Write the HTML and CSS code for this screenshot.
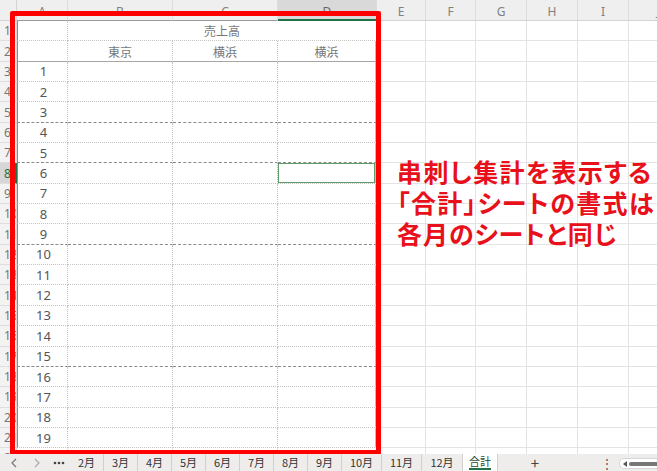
FILE: index.html
```html
<!DOCTYPE html>
<html lang="ja">
<head>
    <meta charset="UTF-8">
    <meta name="viewport" content="width=device-width, initial-scale=1.0">
    <title>合計</title>
    <link rel="stylesheet" href="styles.css">
</head>
<body>
    <div class="sheet">
        <div class="grid" id="grid"></div>
        <div class="frame"></div>
        <div class="note">
            <div class="line1">串刺し集計を表示する</div>
            <div class="line2">「合計」シートの書式は</div>
            <div class="line3">各月のシートと同じ</div>
        </div>
    </div>
    <div class="tabs">
        <span class="nav"><svg width="8" height="10" viewBox="0 0 8 10"><polyline points="6,1 2,5 6,9" fill="none" stroke="#777" stroke-width="1.2"/></svg></span>
        <span class="nav"><svg width="8" height="10" viewBox="0 0 8 10"><polyline points="2,1 6,5 2,9" fill="none" stroke="#aaa" stroke-width="1.2"/></svg></span>
        <span class="more"><svg width="12" height="4" viewBox="0 0 12 4"><circle cx="2" cy="2" r="1.3" fill="#444"/><circle cx="6" cy="2" r="1.3" fill="#444"/><circle cx="10" cy="2" r="1.3" fill="#444"/></svg></span>
        <span class="tab">2月</span>
        <span class="tab">3月</span>
        <span class="tab">4月</span>
        <span class="tab">5月</span>
        <span class="tab">6月</span>
        <span class="tab">7月</span>
        <span class="tab">8月</span>
        <span class="tab">9月</span>
        <span class="tab wide">10月</span>
        <span class="tab wide">11月</span>
        <span class="tab wide last">12月</span>
        <span class="tab current"><span class="label">合計</span></span>
        <span class="add">+</span>
        <span class="kebab">⋮</span>
        <div class="scroll"><span class="arrow"></span><span class="thumb"></span></div>
    </div>

    <script>
        const cols = ['A', 'B', 'C', 'D', 'E', 'F', 'G', 'H', 'I', 'J'];
        const grid = document.getElementById('grid');
        const darkLines = [5, 7, 11, 17];

        function addCell(className, text) {
            const el = document.createElement('div');
            el.className = className;
            if (text) el.textContent = text;
            grid.appendChild(el);
            return el;
        }

        // 列見出し
        addCell('corner');
        cols.forEach((c, i) => {
            let cls = 'col-head';
            if (i < 4) cls += ' in-area';
            if (c === 'D') cls += ' active';
            addCell(cls, c);
        });

        // 行
        for (let r = 1; r <= 22; r++) {
            addCell('row-head' + (r === 8 ? ' active' : ''), String(r));
            cols.forEach((c, i) => {
                if (r === 1 && (c === 'C' || c === 'D')) return;
                let cls = 'cell';
                let text = '';
                if (i < 4 && r <= 21) {
                    cls += ' area';
                    if (c === 'A') cls += ' col-a';
                    if (c === 'D') cls += ' col-d';
                    if (r === 2) cls += ' line-solid';
                    if (darkLines.includes(r)) cls += ' line-dark';
                    if (r === 1 && c === 'B') { cls += ' merge'; text = '売上高'; }
                    if (r === 2 && c === 'B') text = '東京';
                    if (r === 2 && (c === 'C' || c === 'D')) text = '横浜';
                    if (r >= 3 && c === 'A') text = String(r - 2);
                    if (r === 8 && c === 'D') cls += ' selected';
                }
                addCell(cls, text);
            });
        }
    </script>
</body>
</html>
```

FILE: styles.css
```css
body {
    margin: 0;
    width: 657px;
    height: 471px;
    overflow: hidden;
    background-color: #fff;
    font-family: 'Noto Sans CJK JP', sans-serif;
}

.sheet {
    position: relative;
    height: 454px;
    overflow: hidden;
}

.grid {
    display: grid;
    grid-template-columns: 17px 51px 105px 105px 99px 49px 50px 51px 51px 51px 60px;
    grid-template-rows: 21px repeat(22, 20.35px);
}

.grid > div {
    box-sizing: border-box;
    display: flex;
    align-items: center;
    justify-content: center;
    overflow: hidden;
    white-space: nowrap;
}

.corner {
    background-color: #efefef;
    border-right: 1px solid #d4d4d4;
    border-bottom: 1px solid #d4d4d4;
}

.col-head {
    background-color: #efefef;
    border-right: 1px solid #dcdcdc;
    border-bottom: 1px solid #d4d4d4;
    color: #808080;
    font-family: 'Noto Sans', sans-serif;
    font-size: 12px;
    padding-top: 3px;
}

.col-head.in-area {
    border-bottom-color: #9a9a9a;
}

.col-head.active {
    background-color: #d9d9d9;
    color: #666;
    border-bottom: 2px solid #217346;
}

.row-head {
    background-color: #f3f3f3;
    border-right: 1px solid #d4d4d4;
    border-bottom: 1px solid #dedede;
    color: #777;
    font-family: 'Noto Sans', sans-serif;
    font-size: 12px;
    justify-content: flex-start !important;
    padding-left: 4px;
}

.row-head.active {
    background-color: #d6d6d6;
    color: #217346;
    border-right: 2px solid #217346;
}

.cell {
    border-right: 1px solid #e3e3e3;
    border-bottom: 1px solid #e3e3e3;
    font-size: 12px;
    color: #666;
}

.cell.area {
    border-right: 1px dotted #c4c4c4;
    border-bottom: 1px dotted #c4c4c4;
}

.cell.col-a {
    border-left: 1px solid #8c8c8c;
    color: #555;
    font-family: 'Noto Sans', sans-serif;
    font-size: 13px;
    padding-left: 2px;
}

.cell.col-d {
    border-right: 2px solid #bdbdbd;
}

.cell.merge {
    grid-column: span 3;
    color: #777;
}

.cell.line-solid {
    border-bottom: 1px solid #a6a6a6;
    color: #777;
}

.cell.line-dark {
    border-bottom: 1px dashed #8a8a8a;
}

.cell.selected {
    box-shadow: inset 0 0 0 1px #5e9c69;
}

.frame {
    position: absolute;
    left: 10px;
    top: 11px;
    width: 371px;
    height: 444px;
    box-sizing: border-box;
    border: 5px solid #f00;
    border-radius: 2px;
}

.note {
    position: absolute;
    left: 397px;
    top: 156px;
    color: #e8101a;
    font-weight: bold;
    font-size: 25px;
    line-height: 31px;
    font-feature-settings: "palt";
    white-space: nowrap;
}

.line1 {
    letter-spacing: 1.4px;
}

.line2 {
    letter-spacing: 1.4px;
}

.line3 {
    letter-spacing: 1px;
}

.tabs {
    display: flex;
    align-items: stretch;
    height: 17px;
    background-color: #efedeb;
    padding-left: 2px;
    font-size: 11px;
    color: #333;
}

.tabs > span {
    display: flex;
    align-items: center;
    justify-content: center;
    box-sizing: border-box;
    line-height: 1;
}

.nav {
    width: 23px;
}

.more {
    width: 22px;
}

.tab {
    width: 34px;
    border-right: 1px solid #d2d0ce;
}

.tab.wide {
    width: 40px;
}

.tab.last {
    width: 41px;
}

.tab.current {
    width: 35px;
    background-color: #fff;
}

.tab.current .label {
    border-bottom: 2px solid #217346;
    line-height: 13px;
    color: #1f4d2e;
}

.add {
    width: 74px;
    font-size: 15px;
    color: #444;
}

.kebab {
    width: 20px;
    margin-left: 25px;
    font-size: 12px;
    color: #555;
}

.scroll {
    flex: 1;
    display: flex;
    align-items: center;
    gap: 2px;
    height: 9px;
    margin: 4px 0 0 2px;
    padding-left: 3px;
    background-color: #fff;
    border: 1px solid #d6d6d6;
    border-right: none;
    border-radius: 5px 0 0 5px;
}

.arrow {
    width: 0;
    height: 0;
    border-top: 3px solid transparent;
    border-bottom: 3px solid transparent;
    border-right: 4px solid #555;
}

.thumb {
    flex: 1;
    height: 4px;
    background-color: #777;
    border-radius: 2px 0 0 2px;
}
```
